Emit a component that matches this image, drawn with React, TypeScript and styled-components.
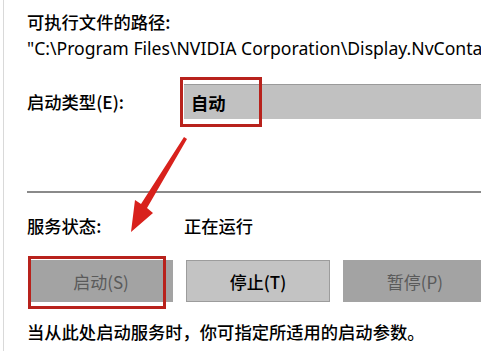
import styled, { createGlobalStyle } from 'styled-components';

const GlobalStyle = createGlobalStyle`
  html, body {
    margin: 0;
    padding: 0;
    background: #ffffff;
  }
  body {
    font-family: "Noto Sans CJK SC", "Noto Sans", sans-serif;
    color: #000;
  }
`;

const Page = styled.div`
  position: relative;
  width: 481px;
  height: 351px;
  overflow: hidden;
  box-sizing: border-box;
  border-left: 1px solid #d9d9d9;
  margin-left: 3px;
  padding: 9px 0 0 23px;
`;

const Label = styled.div`
  font-size: 17.3px;
  font-weight: 500;
  line-height: 26px;
  white-space: nowrap;
`;

const PathText = styled.div`
  font-family: "Noto Sans", "Noto Sans CJK SC", sans-serif;
  font-size: 17.6px;
  line-height: 26px;
  white-space: nowrap;
  overflow: hidden;
  margin-right: -3px;
`;

const Row = styled.div<{ $top: number }>`
  display: flex;
  align-items: center;
  margin-top: ${(p) => p.$top}px;
`;

const RowLabel = styled(Label)`
  width: 157px;
  flex: none;
`;

const Combo = styled.div`
  position: relative;
  flex: 1;
  height: 35px;
  box-sizing: border-box;
  margin-right: -40px;
  background: #c1c1c1;
  border-top: 1px solid #9a9a9a;
  display: flex;
  align-items: center;
  padding-left: 7px;
  font-size: 17.3px;
  font-weight: 600;
`;

const Highlight = styled.div<{ $l: number; $t: number; $w: number; $h: number }>`
  position: absolute;
  left: ${(p) => p.$l}px;
  top: ${(p) => p.$t}px;
  width: ${(p) => p.$w}px;
  height: ${(p) => p.$h}px;
  box-sizing: border-box;
  border: 3px solid #b8221c;
  pointer-events: none;
`;

const Separator = styled.div`
  height: 2px;
  background: #8a8a8a;
  margin-top: 72px;
  margin-right: -20px;
`;

const Buttons = styled.div`
  display: flex;
  gap: 13px;
  margin-top: 21px;
  margin-left: 2px;
  margin-right: -40px;
`;

const Button = styled.div<{ $disabled?: boolean }>`
  position: relative;
  flex: none;
  width: 144px;
  height: 42px;
  box-sizing: border-box;
  display: flex;
  align-items: center;
  justify-content: center;
  font-size: 17px;
  font-weight: ${(p) => (p.$disabled ? 400 : 500)};
  background: ${(p) => (p.$disabled ? '#a3a3a3' : '#c3c3c3')};
  color: ${(p) => (p.$disabled ? '#5a5a5a' : '#000')};
  border: 1px solid ${(p) => (p.$disabled ? '#a3a3a3' : '#9c9c9c')};
`;

const Note = styled(Label)`
  margin-top: 17px;
`;

const Arrow = styled.svg`
  position: absolute;
  left: 0;
  top: 0;
  pointer-events: none;
`;

export default function App() {
  return (
    <>
      <GlobalStyle />
      <Page>
        <Label>可执行文件的路径:</Label>
        <PathText>"C:\Program Files\NVIDIA Corporation\Display.NvContainer\NVDisplay.Container.exe"</PathText>
        <Row $top={23}>
          <RowLabel>启动类型(E):</RowLabel>
          <Combo>
            自动
            <Highlight $l={-4} $t={-8} $w={82} $h={50} />
          </Combo>
        </Row>
        <Separator />
        <Row $top={20}>
          <RowLabel>服务状态:</RowLabel>
          <Label>正在运行</Label>
        </Row>
        <Buttons>
          <Button $disabled>
            启动(S)
            <Highlight $l={-2} $t={-5} $w={138} $h={53} />
          </Button>
          <Button>停止(T)</Button>
          <Button $disabled>暂停(P)</Button>
        </Buttons>
        <Note>当从此处启动服务时，你可指定所适用的启动参数。</Note>
        <Arrow width="481" height="351" viewBox="0 0 481 351">
          <path
            d="M180 137 L183 139 L143 208 L149 213 L127 232 L131 200 L137 204 Z"
            fill="#d8211c"
          />
        </Arrow>
      </Page>
    </>
  );
}
